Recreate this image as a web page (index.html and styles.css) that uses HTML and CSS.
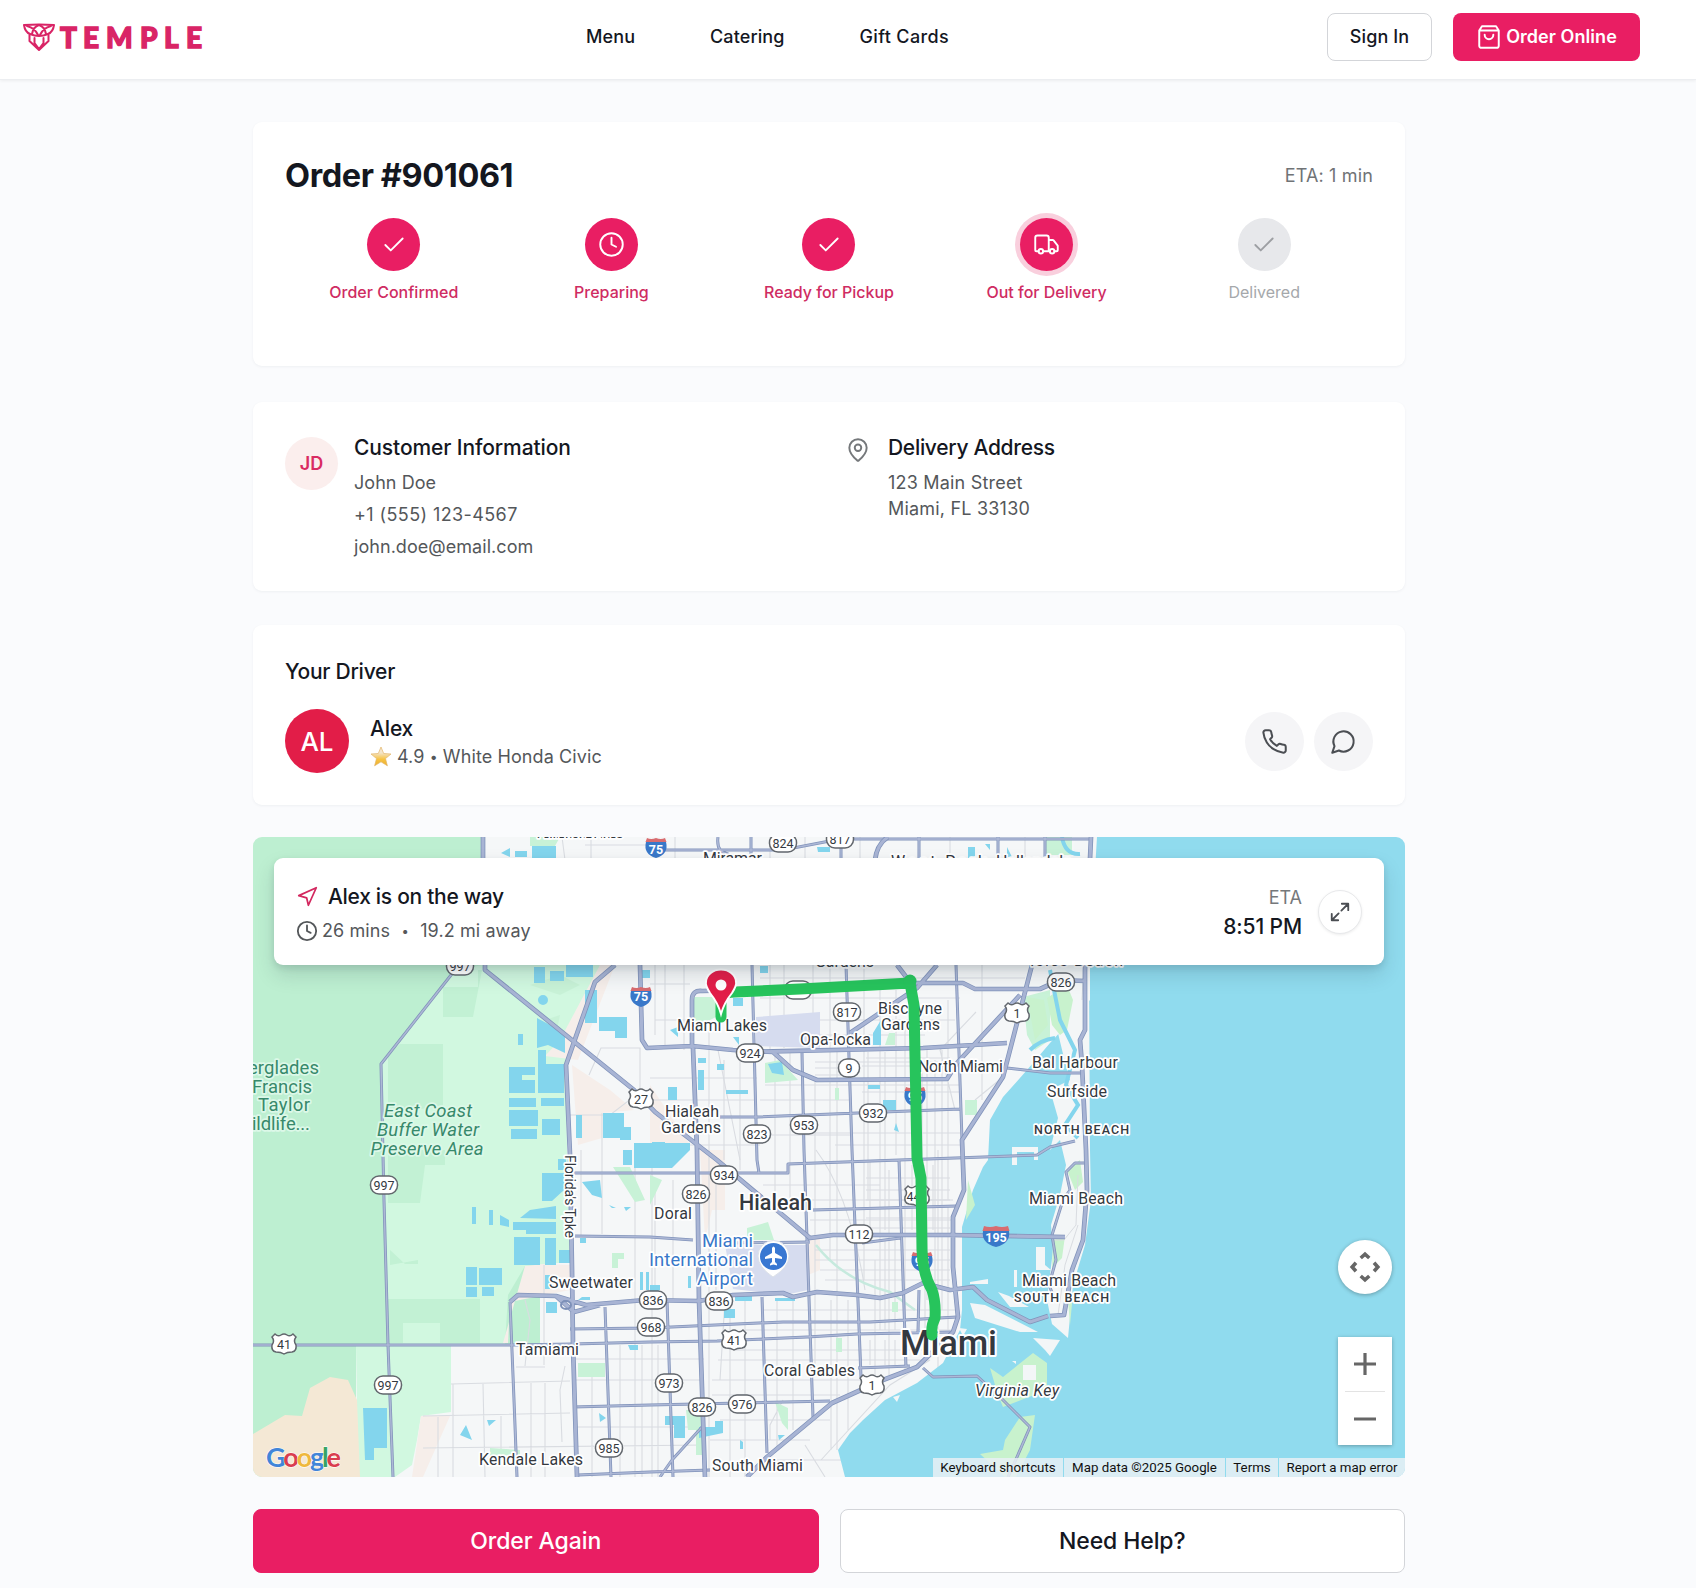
FILE: index.html
```html
<!DOCTYPE html>
<html lang="en">
<head>
<meta charset="utf-8">
<title>Temple - Order #901061</title>
<link rel="stylesheet" href="styles.css">
</head>
<body>
<header class="site-header">
  <a class="logo" aria-label="Temple">
    <svg width="190" height="38" viewBox="22 17 190 38">
      <g fill="none" stroke="#d92466" stroke-width="2" stroke-linejoin="round" stroke-linecap="round">
        <path d="M24 24Q39 23 54 24Q53 31 48 33Q39 37 30 33Q25 31 24 24Z"/>
        <path d="M27 25Q35 27 38 34M51 25Q43 27 40 34M32 33Q33 26 39 24Q45 26 46 33"/>
        <path d="M29.500 34V40L39 49L48.500 40V34M34.500 37V42L39 48L43.500 42V37"/>
      </g>
      <text class="wordmark" y="46.500" x="60 83 106 140 164 186">TEMPLE</text>
    </svg>
  </a>
  <nav class="nav"><a>Menu</a><a>Catering</a><a>Gift Cards</a></nav>
  <div class="header-actions">
    <button class="btn btn-outline">Sign In</button>
    <button class="btn btn-primary">
      <svg class="icon" width="26" height="26" viewBox="0 0 24 24"><path d="M3 6l2.500-4h13L21 6v14a2 2 0 0 1-2 2H5a2 2 0 0 1-2-2zM3 6h18M16 10a4 4 0 0 1-8 0"/></svg>
      <span>Order Online</span>
    </button>
  </div>
</header>

<main class="page">
  <section class="card order">
    <div class="order-head"><h1>Order #901061</h1><span class="eta">ETA: 1 min</span></div>
    <ol class="steps">
      <li><span class="dot"><svg class="icon" width="26" height="26" viewBox="0 0 24 24"><path d="M20 6L9 17l-5-5"/></svg></span><span>Order Confirmed</span></li>
      <li><span class="dot"><svg class="icon" width="27" height="27" viewBox="0 0 24 24"><circle cx="12" cy="12" r="10"/><path d="M12 6v6l4 2"/></svg></span><span>Preparing</span></li>
      <li><span class="dot"><svg class="icon" width="26" height="26" viewBox="0 0 24 24"><path d="M20 6L9 17l-5-5"/></svg></span><span>Ready for Pickup</span></li>
      <li><span class="dot current"><svg class="icon" width="27" height="27" viewBox="0 0 24 24"><path d="M14 18V6a2 2 0 0 0-2-2H4a2 2 0 0 0-2 2v11a1 1 0 0 0 1 1h2M15 18H9M19 18h2a1 1 0 0 0 1-1v-3.650a1 1 0 0 0-.220-.624l-3.480-4.350A1 1 0 0 0 17.520 8H14"/><circle cx="17" cy="18" r="2"/><circle cx="7" cy="18" r="2"/></svg></span><span>Out for Delivery</span></li>
      <li class="pending"><span class="dot"><svg class="icon" width="26" height="26" viewBox="0 0 24 24"><path d="M20 6L9 17l-5-5"/></svg></span><span>Delivered</span></li>
    </ol>
  </section>

  <section class="card details">
    <div class="detail">
      <span class="avatar avatar-light">JD</span>
      <div class="customer"><h2>Customer Information</h2><p>John Doe</p><p class="phone">+1 (555) 123-4567</p><p>john.doe@email.com</p></div>
    </div>
    <div class="detail">
      <svg class="icon pin" width="26" height="26" viewBox="0 0 24 24"><path d="M20 10c0 5-5.500 10.200-7.400 11.800a1 1 0 0 1-1.200 0C9.500 20.200 4 15 4 10a8 8 0 0 1 16 0"/><circle cx="12" cy="10" r="3"/></svg>
      <div class="address"><h2>Delivery Address</h2><p>123 Main Street</p><p>Miami, FL 33130</p></div>
    </div>
  </section>

  <section class="card driver">
    <h2>Your Driver</h2>
    <div class="driver-row">
      <span class="avatar avatar-driver">AL</span>
      <div class="driver-info">
        <h3>Alex</h3>
        <p><svg width="22" height="21" viewBox="0 0 22 21"><defs><linearGradient id="star" x2="0" y2="1"><stop offset=".3" stop-color="#f3e5cd"/><stop offset=".65" stop-color="#f7c343"/><stop offset="1" stop-color="#edb02d"/></linearGradient></defs><path fill="url(#star)" stroke="#e3b568" stroke-width=".7" d="M11 1l2.700 6.500 7.300.500-5.500 4.600 1.900 7.200-6.400-4-6.400 4 1.900-7.200L1 8l7.300-.500z"/></svg><span>4.9 <small>•</small> White Honda Civic</span></p>
      </div>
      <button class="round" aria-label="Call"><svg class="icon" width="27" height="27" viewBox="0 0 24 24"><path d="M22 16.920v3a2 2 0 0 1-2.180 2 19.790 19.790 0 0 1-8.630-3.070 19.500 19.500 0 0 1-6-6 19.790 19.790 0 0 1-3.070-8.670A2 2 0 0 1 4.110 2h3a2 2 0 0 1 2 1.720 12.840 12.840 0 0 0 .7 2.810 2 2 0 0 1-.450 2.110L8.090 9.910a16 16 0 0 0 6 6l1.270-1.270a2 2 0 0 1 2.110-.450 12.840 12.840 0 0 0 2.810.7A2 2 0 0 1 22 16.920z"/></svg></button>
      <button class="round" aria-label="Message"><svg class="icon" width="27" height="27" viewBox="0 0 24 24"><path d="M7.900 20A9 9 0 1 0 4 16.100L2 22Z"/></svg></button>
    </div>
  </section>

  <section class="map">
    <svg class="map-canvas" width="1152" height="640" viewBox="253 837 1152 640">
      <defs>
        <g id="sr"><rect x="-13.500" y="-9" width="27" height="18" rx="8.500" fill="#fff" stroke="#62676d" stroke-width="1.500"/></g>
        <g id="s1"><rect x="-10.500" y="-9" width="21" height="18" rx="8.500" fill="#fff" stroke="#62676d" stroke-width="1.500"/></g>
        <path id="us" d="M-9-10Q-6-7-3-9Q0-11 3-9Q6-7 9-10L12-7Q9-3 12 1Q13 7 8 8Q3 8 0 10Q-3 8-8 8Q-13 7-12 1Q-9-3-12-7Z" fill="#fff" stroke="#62676d" stroke-width="1.500"/>
        <g id="is"><path d="M-10-5H10Q13 7 0 11Q-13 7-10-5Z" fill="#3978c9"/><path d="M-9-9Q-5-7 0-9Q5-7 9-9L10.500-5H-10.500Z" fill="#d86c70"/></g>
        <g id="is3"><path d="M-13-5H13Q15 7 0 11Q-15 7-13-5Z" fill="#3978c9"/><path d="M-12-10Q-6-8 0-10Q6-8 12-10L13.500-5H-13.500Z" fill="#d86c70"/></g>
        <path id="roads" d="M253 1345H512L573 1344L650 1342L717 1341L807 1337L857 1334L953 1332M455 970L381 1064L384 1200L388 1345L393 1477M510 1302L514 1400L517 1477M605 1307L611 1477M667 1300L673 1477M702 1427L672 1460L660 1477M751 837V860M752 965L757 1160L759 1173M762 1297L767 1453M802 1053L804 1150L813 1417M841 845V860M846 965L852 1150L861 1377M899 1160L906 1367M919 1290L918 1332M956 965L962 1140M720 1117H757L960 1109M573 1173H650L788 1173V1164L1037 1155L1050 1147L1075 1141M575 1236L650 1237L693 1240M735 1243L810 1242M570 1329L650 1328L783 1322H870L957 1317M573 1407L650 1405L830 1401M578 1475L650 1472L710 1470M858 1368L910 1366M813 1210L957 1206M650 850H783L840 839H1091M718 837Q716 852 728 854L732 860M919 837V860M998 837V860M1045 837V860M862 1243L900 1238M1007 1068L1050 1073H1084M923 1368L933 1377L977 1376L1000 1397L1030 1427L1017 1457L1008 1477M1055 1300L1049 1285L1056 1260L1052 1235L1063 1200L1070 1190L1066 1172L1075 1163H1086"/>
        <path id="highways" d="M483 837V860M485 965V970L634 1090L655 1112L717 1160L810 1238L833 1235H950L1065 1237M615 965L595 982L566 1065L570 1155L572 1270L573 1345L577 1477M640 965L642 1040L647 1048L692 1046L733 1050L773 1052L793 1070L817 1080L947 1079L957 1063L1020 995M750 1052L923 1048L1007 1043M692 1048V1000Q692 990 702 991L740 990M693 1048L697 1150L699 1300L705 1477M510 1302L518 1295L556 1296L586 1305L645 1300L699 1301L733 1295L783 1293L793 1297L817 1292L857 1295L880 1298L903 1293L923 1283L950 1290L973 1287L987 1300L1030 1322L1048 1316M556 1296L574 1312L600 1305M807 988L908 983H963L975 989H1040L1060 980L1085 981M937 965L917 988L850 1033M897 965L910 982M875 860Q877 844 888 837M1032 965L1003 1077L962 1140L964 1190L953 1217V1267L958 1317L953 1332L917 1367L883 1380L832 1403L767 1457L747 1477M1091 837L1085 970V1030L1080 1040L1082 1065L1086 1150L1087 1190L1083 1240L1072 1270L1064 1315L1050 1316"/>
      </defs>
      <rect x="253" y="837" width="1152" height="640" fill="#f5f7f8"/>
      <path fill="#bdefd1" d="M253 837H483V965L520 1000L540 1080V1345H253Z"/>
      <path fill="#d1f8e0" d="M483 965L600 965L580 1025L565 1065L570 1262L525 1266L508 1295L505 1345H451V1412L421 1416L417 1440L412 1465L395 1477H358L356 1345H388L381 1064L455 970Z"/>
      <path fill="#c2f1d4" d="M443 987H478V970H482L473 1017H443ZM388 1055L400 1044H443V1105L388 1115ZM388 1150H445V1165H425L420 1203H388ZM388 1299H480V1343H440V1323H403V1343H388ZM390 1250L405 1264H418V1260L390 1265Z"/>
      <path fill="#bdefd1" d="M253 1345H356V1477H253Z"/>
      <path fill="#f4e8d5" d="M253 1434L285 1415L302 1416L310 1388L330 1377L348 1380L357 1400L360 1477H253Z"/>
      <path fill="#f6eeea" d="M600 965H615L578 1060L545 1056L560 1040ZM572 1065L610 1090L634 1110L602 1113V1138L578 1145ZM525 1266L545 1264L570 1265V1290L510 1302L508 1343H503ZM421 1416H450L423 1477H412ZM700 1150H725V1210H712L705 1240ZM808 1238H820V1270L808 1275ZM650 1085L690 1145H650Z"/>
      <g fill="none" stroke="#d9dce1" stroke-width="1.100">
        <path d="M581 1150V1235M602 1113V1234M635 1155V1477M652 1165V1477M589 1075L601 1048H640V1092L610 1115H570M516 1367H545M525 1300L530 1320L525 1366M544 1265V1365M565 1366L560 1390L562 1442M531 1383V1477M545 1383V1477M451 1384L570 1381M423 1416L570 1413M423 1448L705 1445M438 1417V1477M453 1384V1477M483 1384L485 1477M501 1416V1450M575 1359H704M575 1380H704M575 1427H704M592 1377V1477M620 1345V1477M642 1345V1477M658 1345V1477M655 1180V1300M673 1180V1300M684 965V1050M665 965V1048M655 1020H690M655 965V1035M709 1010V1477M724 1060V1160M740 1050V1170M650 1078H757M650 1100H757M650 984H690M655 1145H760M716 1180V1290"/>
        <path d="M770 965V1050M784 965V1048M813 965V1050M830 965V1260M864 965V1280M880 990V1330M896 990V1155M922 1060V1240M935 1060V1330M948 1000V1200M982 965V1100M760 978H1025M760 998H960M815 1020H955M815 1035H925M815 1062H960M815 1068H846M815 1075H846M866 1058H950M862 1066H950M862 1092H960M760 1100H850M812 1133H960M835 1145H960M765 1135H850M765 1085H960M775 1052V1200M790 1052V1200M815 1080V1370M837 1052V1450M868 1052V1200M885 1052V1230M905 1020V1370M927 1050V1300M942 1050V1310M976 1012L940 1050L955 1110M1003 1077L975 1100"/>
        <path d="M763 1185H880M780 1200H953M810 1220H953M815 1250H950M815 1260H950M820 1270H950M825 1280H950M762 1310H958M745 1330H955M735 1350H930M718 1360H930M712 1380H860M712 1395H840M720 1420H830M710 1440H810M770 1460H825M730 1300V1477M745 1300V1477M777 1300V1450M793 1300V1430M831 1300V1450M848 1300V1430M875 1260V1380M889 1170V1375M938 1150V1370M948 1205V1330M783 1400L770 1425V1440M821 1460L890 1385L930 1360M812 1460H850M805 1445L825 1477M585 845H650M562 837L565 860M591 837V860M675 837V858M770 837V858M805 837V858M860 837V858M950 837V858M1025 837V858M1060 837V858"/>
        <path d="M718 1050L740 1160M816 1150Q850 1195 865 1290M725 1300L720 1380M870 1160V1230M912 1165V1230M924 1165V1230M933 1165V1230M866 1178H950M866 1190H950M866 1200H950M866 1218H950M866 1228H950M885 1240V1330M895 1240V1330M925 1240V1330M870 1340V1365M885 1340V1365M895 1340V1365"/>
      </g>
      <path fill="#d6dcef" d="M756 1017L820 1012V1048L756 1046ZM725 1245H808V1290L785 1295L733 1289Z"/>
      <path fill="#c8f2d7" d="M1045 837H1072V855H1045ZM765 1063L780 1060L798 1080L765 1083ZM694 997H720V1015L694 1028ZM1023 997L1050 990V1040L1035 1050L1027 1035ZM747 1228L768 1222L774 1240L747 1240ZM578 1363H605V1377H578ZM686 1410H702V1455H696V1430H688ZM775 1402L788 1408V1430L782 1423ZM965 1100H977V1115H965ZM835 1088H839V1100H835ZM560 837H530V846H555ZM650 1175L662 1180L650 1205ZM612 1253H624V1259H618V1268H612ZM490 1448L520 1450V1455L490 1456ZM892 1302H898V1312H892ZM836 1338H842V1352H836ZM613 1167H630L645 1200L635 1202ZM545 1020L560 1015L555 1040ZM889 1033H895V1045H885ZM530 985L560 975L580 985L560 995Z"/>
      <g fill="#83d5ed">
        <path d="M501 853L510 848V857ZM532 846H556V858H532ZM515 851H527V857H515ZM534 967H545V983H534ZM550 971H564V981H550ZM566 965H593V977H566ZM585 990H597V1023H585ZM599 1017H627V1038H615V1031H599ZM537 1018L565 1033V1053L548 1045L537 1048ZM518 1034H523V1045H518ZM509 1067H535V1075H522V1080H535V1093H509ZM538 1050H546V1064H564V1093H538ZM509 1098H536V1107H509ZM541 1098H564V1106H541ZM509 1110H538V1126H509ZM511 1129H537V1139H511ZM542 1119H560V1135H542ZM576 1115H582V1138H576ZM603 1113H624V1138H603ZM620 1127H631V1140H620ZM634 1143H690V1150L672 1168H634ZM623 1150H632V1165H623ZM543 995A5 5 0 1 0 543 1005A5 5 0 1 0 543 995Z"/>
        <path d="M542 1173H564V1190L552 1201H542ZM558 1159H566V1170H558ZM520 1218L530 1210L556 1206V1219ZM513 1222H556V1234H526V1230H513ZM514 1237H540V1265H514ZM545 1238H556V1265H545ZM559 1250H571V1263H559ZM472 1207H476V1224H472ZM489 1210H493V1225H489ZM500 1215L509 1220V1227L500 1225ZM466 1267H477V1285H466ZM479 1268H502V1285H479ZM466 1287H477V1297H466ZM482 1287H494V1296H482ZM545 1275H550V1289H545ZM546 1302H557V1313H546ZM363 1408H387V1448H374V1460H365Z"/>
        <path d="M582 1182L600 1180L602 1198L592 1195ZM609 1205L616 1208L612 1208ZM624 1207H631L626 1211ZM580 1238H586V1243H580ZM640 1272H643V1290H640ZM646 1272H649V1290H646ZM460 1435L466 1425L472 1440ZM487 1420H496L489 1426ZM599 1413L606 1418L600 1422ZM598 1430L606 1435ZM628 1345H638V1350H630ZM735 860H750V855ZM817 847H830V852H818ZM968 847H975V858H968ZM985 844H990V850ZM1007 847L1012 857H1007ZM760 966H768V973H760ZM733 998H743V1006H733ZM670 1030L678 1027V1037ZM698 1058H706V1063H698ZM698 1070H704V1090H698ZM717 1064H724V1070H717ZM726 1090H748V1094H726ZM668 1087H677V1100H668ZM768 1064L782 1062L784 1075L772 1073ZM868 1085H880V1089H868ZM873 1033L881 1020V1045H873ZM883 1100H896V1110H883ZM733 1037H739V1045ZM642 970H650V978H642ZM665 1416H685V1438H674V1425H665ZM699 1427H715V1421H723V1433L699 1438ZM724 1309H735V1318H724ZM735 1295H752V1301H735ZM775 1298H795V1301H775ZM688 1276H691V1288H688ZM578 1300H590V1297H582ZM778 1435H785L779 1440ZM740 1440L743 1442V1449H740ZM896 1123L899 1132L894 1130ZM650 1285H660V1290L650 1295ZM652 1142H665V1160H652Z"/>
      </g>
      <path d="M816 1245Q843 1280 890 1292L915 1310" fill="none" stroke="#c6eade" stroke-width="2.500"/>
      <path fill="#90dbee" d="M1405 837H1090V1000L1050 1043L1027 1070L1003 1097L990 1120L988 1160L983 1167L973 1190L962 1227V1310L960 1330L943 1363L917 1383L885 1400L863 1420L850 1433L838 1450L845 1477H1405Z"/>
      <path fill="#f3f6f7" d="M1050 1000L1068 920L1075 837H1097L1089 970L1090 1150L1091 1200L1085 1245L1073 1285L1068 1338L1052 1324L1047 1300L1053 1250L1051 1225L1060 1195L1066 1165L1060 1140L1050 1150L1058 1118L1050 1090L1070 1080L1064 1058ZM970 1303L985 1305L1038 1332L1020 1332L975 1318ZM1033 1338L1060 1340L1050 1356L1045 1350ZM998 1292L1009 1296L1029 1307H1010ZM1036 1247H1045V1265L1051 1270H1036ZM1012 1147H1038V1160H1034V1152H1017V1165H1012ZM1014 1270H1017V1287H1014ZM970 1282L988 1279V1284H970ZM959 1328L967 1329L963 1336ZM1012 1361H1016V1364ZM893 1397L900 1395L897 1402Z"/>
      <g fill="#c8f2cd"><path d="M1047 998L1067 985L1073 1000L1067 1030L1060 1035L1052 1025ZM1027 997L1044 1000L1048 1025L1035 1040ZM1067 1170L1080 1160L1083 1182L1075 1190ZM1053 1240L1065 1236L1062 1258L1052 1268ZM990 1368L1003 1377L1033 1353L1047 1363V1390L1003 1407L998 1395ZM1020 1417L1035 1415L1030 1450L1016 1477H1005L980 1454L1003 1450L1005 1440ZM968 1180L975 1205L966 1220ZM1073 1293L1070 1325L1068 1300Z"/></g>
      <path fill="#f3f6f7" d="M1023 1365H1036V1380H1023Z"/>
      <path d="M1050 970L1060 1020L1075 1050L1066 1085L1078 1105L1065 1125L1078 1138M1062 837Q1065 855 1080 854M1030 1050Q1040 1040 1055 1038" fill="none" stroke="#83d5ed" stroke-width="4"/>
      <path fill="none" stroke="#d9dce1" d="M1078 1175L1076 1225L1064 1240H1052M1078 1225L1065 1265L1058 1315M1090 837L1082 1000"/>
      <use href="#roads" class="road-case"/><use href="#roads" class="road"/>
      <use href="#highways" class="highway-case"/><use href="#highways" class="highway"/>
      <ellipse cx="566" cy="1305" rx="5" ry="4" fill="none" stroke="#7d90b8" stroke-width="2"/>

      <g class="label">
        <text x="537" y="838" textLength="86" class="small">PEMBROKE PINES</text>
        <text x="703" y="864" textLength="59">Miramar</text><text x="891" y="867" textLength="95">West Park</text><text x="996" y="867">Hallandale</text>
        <text x="815" y="967" textLength="59">Gardens</text><text x="1030" y="966" textLength="93">Isles Beach</text>
        <text x="677" y="1031" textLength="90">Miami Lakes</text><text x="800" y="1045" textLength="71">Opa-locka</text>
        <text x="878" y="1014" textLength="64">Biscayne</text><text x="881" y="1030" textLength="59">Gardens</text>
        <text x="918" y="1072" textLength="85">North Miami</text><text x="1032" y="1068" textLength="86">Bal Harbour</text><text x="1047" y="1097" textLength="60">Surfside</text>
        <text x="665" y="1117" textLength="54">Hialeah</text><text x="661" y="1133" textLength="60">Gardens</text><text x="654" y="1219" textLength="38">Doral</text>
        <text x="549" y="1288" textLength="84">Sweetwater</text><text x="516" y="1355" textLength="63">Tamiami</text><text x="764" y="1376" textLength="91">Coral Gables</text>
        <text x="479" y="1465" textLength="104">Kendale Lakes</text><text x="712" y="1471" textLength="91">South Miami</text>
        <text x="1029" y="1204" textLength="94">Miami Beach</text><text x="1022" y="1286" textLength="94">Miami Beach</text>
        <text x="975" y="1396" textLength="84" class="it">Virginia Key</text>
        <text x="1034" y="1134" textLength="95" class="hood">NORTH BEACH</text><text x="1014" y="1302" textLength="95" class="hood">SOUTH BEACH</text>
        <text class="city" x="739" y="1210" textLength="73">Hialeah</text><text class="metro" x="900" y="1355" textLength="97">Miami</text>
        <text transform="translate(565 1155) rotate(90)" class="street" textLength="83">Florida's Tpke</text>
        <g class="park"><text x="248" y="1074" textLength="71">erglades</text><text x="252" y="1093" textLength="60">Francis</text><text x="258" y="1111" textLength="52">Taylor</text><text x="252" y="1130" textLength="58">ildlife...</text></g>
        <g class="park it mid"><text x="428" y="1117" textLength="88">East Coast</text><text x="428" y="1136" textLength="102">Buffer Water</text><text x="427" y="1155" textLength="113">Preserve Area</text></g>
        <g class="airport"><text x="702" y="1247" textLength="51">Miami</text><text x="649" y="1266" textLength="104">International</text><text x="697" y="1285" textLength="56">Airport</text></g>
      </g>
      <path d="M773 1277Q758 1267 758 1256A15.500 15.500 0 0 1 789 1256Q789 1267 773 1277Z" fill="#fff" stroke="#dce1e8"/>
      <circle cx="773.500" cy="1256.500" r="13.500" fill="#3978d2"/><path fill="#fff" d="M772 1248Q773.500 1245 775 1248V1253L782 1257V1259L775 1258V1262L777 1264V1265.500L773.500 1264.500L770 1265.500V1264L772 1262V1258L765 1259V1257L772 1253Z"/>

      <g class="shield">
        <use href="#sr" x="460" y="966"/><text x="460" y="971">997</text><use href="#sr" x="783" y="843"/><text x="783" y="848">824</text>
        <use href="#sr" x="840" y="839"/><text x="840" y="844">817</text><use href="#sr" x="847" y="1012"/><text x="847" y="1017">817</text>
        <use href="#sr" x="750" y="1053"/><text x="750" y="1058">924</text><use href="#s1" x="849" y="1068"/><text x="849" y="1073">9</text>
        <use href="#sr" x="873" y="1113"/><text x="873" y="1118">932</text><use href="#sr" x="804" y="1125"/><text x="804" y="1130">953</text>
        <use href="#sr" x="757" y="1134"/><text x="757" y="1139">823</text><use href="#sr" x="724" y="1175"/><text x="724" y="1180">934</text>
        <use href="#sr" x="696" y="1194"/><text x="696" y="1199">826</text><use href="#sr" x="859" y="1234"/><text x="859" y="1239">112</text>
        <use href="#sr" x="653" y="1300"/><text x="653" y="1305">836</text><use href="#sr" x="719" y="1301"/><text x="719" y="1306">836</text>
        <use href="#sr" x="651" y="1327"/><text x="651" y="1332">968</text><use href="#sr" x="669" y="1383"/><text x="669" y="1388">973</text>
        <use href="#sr" x="702" y="1407"/><text x="702" y="1412">826</text><use href="#sr" x="742" y="1404"/><text x="742" y="1409">976</text>
        <use href="#sr" x="609" y="1448"/><text x="609" y="1453">985</text><use href="#sr" x="384" y="1185"/><text x="384" y="1190">997</text>
        <use href="#sr" x="388" y="1385"/><text x="388" y="1390">997</text><use href="#sr" x="1061" y="982"/><text x="1061" y="987">826</text>
        <use href="#sr" x="798" y="990"/>
        <use href="#us" x="641" y="1099"/><text x="641" y="1104">27</text><use href="#us" x="1017" y="1013"/><text x="1017" y="1018">1</text>
        <use href="#us" x="284" y="1344"/><text x="284" y="1349">41</text><use href="#us" x="734" y="1340"/><text x="734" y="1345">41</text>
        <use href="#us" x="872" y="1385"/><text x="872" y="1390">1</text><use href="#us" x="917" y="1196"/><text x="917" y="1201">441</text>
        <g class="inter"><use href="#is" x="656" y="847"/><text x="656" y="854">75</text><use href="#is" x="641" y="996"/><text x="641" y="1001">75</text><use href="#is" x="915" y="1096"/><text x="915" y="1101">95</text><use href="#is" x="922" y="1261"/><text x="922" y="1266">95</text><use href="#is3" x="996" y="1236"/><text x="996" y="1242">195</text></g>
      </g>
      <path class="route" d="M721 1017V1000Q721 992 735 992L800 989L910 983L914 1005L917 1158L921 1178L922 1250Q923 1275 932 1290Q936 1302 935 1318Q931 1325 932 1335"/>
      <circle cx="910" cy="981" r="6.500" fill="#27c45c"/>
      <path d="M721 1014Q718 1003 710 993Q705 985 706 982A15 12.500 0 0 1 736 982Q737 985 732 993Q724 1003 721 1014Z" fill="#e21d48" stroke="#fff" stroke-width="2"/><circle cx="721" cy="985" r="5.500" fill="#fff"/>
      <text class="google" x="266" y="1467" textLength="75"><tspan fill="#4285d8">G</tspan><tspan fill="#da3d4e">o</tspan><tspan fill="#efb83d">o</tspan><tspan fill="#4285d8">g</tspan><tspan fill="#37a464">l</tspan><tspan fill="#da3d4e">e</tspan></text>
    </svg>

    <div class="tracker">
      <div class="tracker-main">
        <div class="tracker-title"><svg class="icon" width="21" height="21" viewBox="0 0 24 24"><path d="M2 11L22 2l-9 20-2-8.500z"/></svg><strong>Alex is on the way</strong></div>
        <div class="tracker-meta"><svg class="icon" width="22" height="22" viewBox="0 0 24 24"><circle cx="12" cy="12" r="10"/><path d="M12 6v6l4 2"/></svg><span>26 mins</span><span class="bullet">•</span><span>19.2 mi away</span></div>
      </div>
      <div class="arrival"><span>ETA</span><strong>8:51 PM</strong></div>
      <button class="expand" aria-label="Expand map"><svg class="icon" width="22" height="22" viewBox="0 0 24 24"><path d="M14 3h7v7M21 3l-7.500 7.500M10 21H3v-7M3 21l7.500-7.500"/></svg></button>
    </div>
    <button class="pan" aria-label="Pan map"><svg width="32" height="32" viewBox="0 0 32 32"><path d="M11.500 6.500L16 2.500L20.500 6.500M25.500 11.500L29.500 16L25.500 20.500M20.500 25.500L16 29.500L11.500 25.500M6.500 20.500L2.500 16L6.500 11.500" transform="translate(.8 .8) scale(.95)"/></svg></button>
    <div class="zoom"><button aria-label="Zoom in"><svg width="22" height="22" viewBox="0 0 22 22"><path d="M0 11H22M11 0V22"/></svg></button><button aria-label="Zoom out"><svg width="22" height="22" viewBox="0 0 22 22"><path d="M0 11H22"/></svg></button></div>
    <div class="credits"><span class="c1">Keyboard shortcuts</span><span class="c2">Map data ©2025 Google</span><span class="c3">Terms</span><span class="c4">Report a map error</span></div>
  </section>

  <div class="footer-actions"><button class="big primary">Order Again</button><button class="big">Need Help?</button></div>
</main>
</body>
</html>
```
FILE: styles.css
```css
* { box-sizing: border-box; }
body { margin: 0; min-height: 1588px; background: #fafbfd; color: #14171f; font-family: Inter, "Liberation Sans", sans-serif; font-size: 18px; }
h1, h2, h3, p, ol { margin: 0; padding: 0; }
button { font: inherit; color: inherit; border: 0; padding: 0; }
.icon { fill: none; stroke: currentColor; stroke-width: 2; stroke-linecap: round; stroke-linejoin: round; flex: none; }

.site-header { height: 80px; padding: 0 56px 6px 22px; display: grid; grid-template-columns: 564px 1fr auto; align-items: center; background: #fff; border-bottom: 1px solid #eceef1; box-shadow: 0 1px 3px rgba(0,0,0,.06); }
.logo svg { display: block; overflow: visible; }
.wordmark { font: 900 28px Lato, sans-serif; fill: #d92466; stroke: #d92466; stroke-width: 1.4; }
.nav { display: flex; gap: 75px; font-weight: 500; letter-spacing: .1px; white-space: nowrap; }
.nav a:nth-child(3) { letter-spacing: .35px; }
.header-actions { display: flex; gap: 21px; }
.btn { height: 48px; border-radius: 8px; display: flex; align-items: center; justify-content: center; gap: 4px; font-weight: 500; letter-spacing: .1px; }
.btn-outline { width: 105px; background: #fff; border: 1px solid #d3d5d9; }
.btn-primary { width: 187px; background: #e91e63; color: #fff; }
.btn-primary span { font-weight: 600; letter-spacing: .05px; }
.btn-primary .icon { stroke-width: 1.8; }

.page { width: 1152px; margin: 42px 0 0 253px; display: flex; flex-direction: column; }
.card { background: #fff; border-radius: 9px; padding: 32px; box-shadow: 0 1px 3px rgba(25,35,60,.05); }
.order { height: 244px; margin-bottom: 36px; }
.order-head { display: flex; justify-content: space-between; align-items: center; height: 42px; }
h1 { font-size: 32.500px; font-weight: 700; letter-spacing: -.4px; }
.eta { color: #707376; letter-spacing: .15px; }
.steps { list-style: none; display: grid; grid-template-columns: repeat(5, 1fr); margin-top: 22px; }
.steps li { display: flex; flex-direction: column; align-items: center; gap: 12px; color: #cf2c62; font-size: 16px; font-weight: 500; line-height: 19px; letter-spacing: 0; }
.dot { width: 53px; height: 53px; border-radius: 50%; background: #e91e63; color: #fff; display: grid; place-items: center; }
.dot .icon { stroke-width: 1.7; }
.dot.current { box-shadow: 0 0 0 5px #f9cfdd; }
.steps .pending { color: #a5a8ab; font-weight: 400; }
.pending .dot { background: #e7e8eb; color: #9d9fa3; }

.details { height: 189px; margin-bottom: 34px; display: grid; grid-template-columns: 561px 1fr; }
.detail { display: flex; }
h2, h3 { font-size: 21px; font-weight: 500; line-height: 26px; letter-spacing: -.15px; }
.avatar { border-radius: 50%; display: grid; place-items: center; flex: none; }
.avatar-light { width: 53px; height: 53px; margin: 3px 16px 0 0; background: #fbeeed; color: #d92b62; font-weight: 600; }
.customer p, .address p { color: #54575a; letter-spacing: .05px; }
.customer p { line-height: 32px; }
.customer .phone { letter-spacing: .4px; }
.customer h2 { margin-bottom: 6px; line-height: 27px; letter-spacing: -.1px; }
.address h2 { margin-bottom: 9px; line-height: 27px; letter-spacing: -.3px; }
.address p { line-height: 26px; letter-spacing: .2px; }
.pin { margin: 3px 17px 0 -1px; color: #75787b; stroke-width: 1.8; }

.driver { height: 180px; margin-bottom: 32px; }
.driver h2 { margin: 2px 0 24px; letter-spacing: -.25px; }
.driver-row { display: flex; align-items: center; height: 64px; }
.avatar-driver { width: 64px; height: 64px; margin-right: 21px; background: #e21d48; color: #fff; font-size: 26px; font-weight: 500; }
.driver-info { flex: 1; padding-top: 5px; }
.driver-info p { display: flex; gap: 5px; align-items: center; line-height: 30px; color: #54575a; letter-spacing: .1px; }
.driver-info small { font-size: 14px; vertical-align: 1px; }
.round { width: 59px; height: 59px; border-radius: 50%; background: #f5f5f7; color: #4b4e53; display: grid; place-items: center; margin-left: 10px; }
.round .icon { stroke-width: 1.8; }

.map { position: relative; height: 640px; border-radius: 9px; overflow: hidden; }
.map-canvas { display: block; }
.road-case, .road, .highway-case, .highway, .route { fill: none; stroke-linejoin: round; }
.road-case { stroke: #8193ba; stroke-width: 3; }
.road { stroke: #adb8d6; stroke-width: 1.5; }
.highway-case { stroke: #8193ba; stroke-width: 4.7; }
.highway { stroke: #a8b4d4; stroke-width: 3.1; }
.route { stroke: #27c45c; stroke-width: 11; stroke-linecap: round; }
.label { font: 16px Roboto, sans-serif; fill: #34393f; stroke: #fff; stroke-width: 3.5px; paint-order: stroke; stroke-linejoin: round; }
.label .small { font-size: 11px; font-weight: 500; }
.label .hood { font-size: 12.500px; font-weight: 500; }
.label .street { font-size: 14px; }
.label .it { font-style: italic; }
.label .city { font-size: 21.500px; font-weight: 500; }
.label .metro { font-size: 35px; font-weight: 500; stroke-width: 4px; }
.label .park { font-size: 18.500px; fill: #37896b; stroke: #dcf8e8; }
.mid { text-anchor: middle; }
.label .airport { font-size: 18.500px; fill: #3978c9; }
.shield { font: 12.5px Roboto, sans-serif; fill: #34393f; text-anchor: middle; }
.inter { fill: #fff; font-weight: 700; }
.google { font: 400 27px Lato, sans-serif; paint-order: stroke; stroke: #fff; stroke-width: 1px; }
.google tspan { font-weight: 700; }

.tracker { position: absolute; left: 21px; top: 21px; width: 1110px; height: 107px; padding: 3px 22px 0; background: #fff; border-radius: 9px; display: flex; align-items: center; box-shadow: 0 10px 20px rgba(30,50,60,.15), 0 3px 6px rgba(30,50,60,.12); }
.tracker-main { flex: 1; display: flex; flex-direction: column; gap: 8px; }
.tracker strong { font-size: 21px; font-weight: 500; letter-spacing: -.3px; line-height: 27px; }
.tracker-title { display: flex; align-items: center; gap: 10px; }
.tracker-title .icon { color: #d3285f; margin-left: 1px; }
.tracker-meta { display: flex; align-items: center; gap: 4px; color: #54575a; line-height: 26px; letter-spacing: .1px; }
.bullet { width: 22px; text-align: center; font-size: 13px; }
.arrival { display: flex; flex-direction: column; align-items: flex-end; gap: 5px; color: #75787b; margin-right: 16px; }
.arrival strong { color: #14171f; letter-spacing: -.1px; }
.expand { width: 44px; height: 44px; margin-top: -3px; border-radius: 50%; background: #fff; border: 1px solid #e8e9eb; display: grid; place-items: center; color: #4b4e53; box-shadow: 0 1px 3px rgba(0,0,0,.08); }
.pan { position: absolute; right: 13px; top: 403px; width: 54px; height: 54px; border-radius: 50%; background: #fff; display: grid; place-items: center; box-shadow: 0 1px 4px rgba(0,0,0,.3); }
.pan path { fill: none; stroke: #666; stroke-width: 3.8; }
.zoom path { fill: none; stroke: #666; stroke-width: 3.2; }
.zoom { position: absolute; right: 13px; top: 500px; width: 54px; height: 108px; background: #fff; box-shadow: 0 1px 4px rgba(0,0,0,.3); display: grid; grid-template-rows: 1fr 1fr; padding: 0 7px; }
.zoom button { background: none; display: grid; place-items: center; }
.zoom button + button { border-top: 1px solid #e3e3e3; }
.credits { position: absolute; right: 0; bottom: 0; display: flex; gap: 1px; height: 19px; font: 13.3px/19px Roboto, sans-serif; color: #111; text-align: center; white-space: nowrap; }
.credits span { background: rgba(233,240,245,.85); }
.c1 { width: 130px; } .c2 { width: 161px; } .c3 { width: 52px; } .c4 { width: 126px; }

.footer-actions { margin-top: 32px; display: grid; grid-template-columns: 1fr 1fr; gap: 21px; }
.big { height: 64px; border-radius: 8px; background: #fff; border: 1px solid #d3d5d9; font-size: 23px; font-weight: 500; letter-spacing: -.1px; }
.big.primary { background: #e91e63; border-color: #e91e63; color: #fff; }
```
